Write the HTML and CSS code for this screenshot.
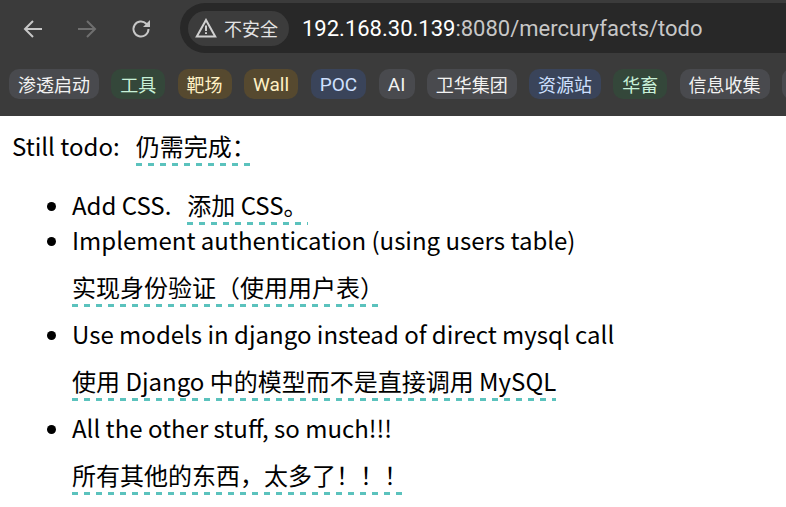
FILE: index.html
```html
<!DOCTYPE html>
<html lang="zh-CN">
<head>
<meta charset="utf-8">
<title>todo</title>
<link rel="stylesheet" href="styles.css">
</head>
<body>
<header class="chrome">
  <div class="toolbar">
    <div class="nav">
      <svg class="icon" viewBox="0 0 24 24"><path d="M21 12H4.500M12 4l-8 8 8 8"/></svg>
      <svg class="icon dim" viewBox="0 0 24 24"><path d="M3 12h16.500M12 4l8 8-8 8"/></svg>
      <svg class="icon" viewBox="0 0 24 24"><path d="M19.500 12a7.500 7.500 0 1 1-2.200-5.300L19 8.500"/><path class="solid" d="M21 3v7h-7z"/></svg>
    </div>
    <div class="omnibox">
      <div class="chip">
        <svg class="warn" viewBox="0 0 22 20"><path d="M11 2 1.800 18.500h18.400z"/><path d="M11 7.500v5.500M11 14.300v1.800"/></svg>
        <span>不安全</span>
      </div>
      <div class="url"><span class="host">192.168.30.139</span>:8080/mercuryfacts/todo</div>
    </div>
  </div>
  <nav class="bookmarks">
    <span class="bm grey">渗透启动</span>
    <span class="bm green">工具</span>
    <span class="bm amber">靶场</span>
    <span class="bm amber latin">Wall</span>
    <span class="bm blue latin">POC</span>
    <span class="bm grey latin">AI</span>
    <span class="bm grey">卫华集团</span>
    <span class="bm blue">资源站</span>
    <span class="bm green">华畜</span>
    <span class="bm grey">信息收集</span>
    <span class="bm grey"></span>
  </nav>
</header>
<main class="page">
  <p class="intro">Still todo:<span class="tr inline">仍需完成：</span></p>
  <ul class="list">
    <li>Add CSS.<span class="tr inline">添加 CSS。</span></li>
    <li>Implement authentication (using users table)<span class="tr block">实现身份验证（使用用户表）</span></li>
    <li>Use models in django instead of direct mysql call<span class="tr block">使用 Django 中的模型而不是直接调用 MySQL</span></li>
    <li>All the other stuff, so much!!!<span class="tr block">所有其他的东西，太多了！！！</span></li>
  </ul>
</main>
</body>
</html>
```

FILE: styles.css
```css
* { box-sizing: border-box; }
html, body { margin: 0; padding: 0; height: 100%; overflow: hidden; background: #fff; }
body { font-family: "Noto Sans CJK SC", "Noto Sans", sans-serif; color: #000; }

.chrome { height: 116px; background: #3b3b3b; color: #fff; display: flex; flex-direction: column; overflow: hidden; }
.toolbar { height: 56px; display: flex; align-items: center; }
.nav { width: 180px; display: flex; gap: 30px; padding: 2px 0 0 21px; align-items: center; flex: none; }
.icon { width: 24px; height: 24px; fill: none; stroke: #c7c7c7; stroke-width: 2; flex: none; }
.icon.dim { stroke: #6f6f6f; }
.icon .solid { fill: #c7c7c7; stroke: none; }
.omnibox { flex: 1; height: 50px; background: #282828; border-radius: 25px 0 0 25px; display: flex; align-items: center; padding-left: 8px; }
.chip { height: 35px; width: 101px; border-radius: 18px; background: #3c3c3c; display: flex; align-items: center; gap: 7px; padding-left: 7px; font-size: 18px; color: #e3e3e3; flex: none; }
.warn { width: 22px; height: 20px; fill: none; stroke: #d0d0d0; stroke-width: 2; flex: none; }
.url { margin-left: 13px; font-family: Roboto, "Noto Sans", sans-serif; font-size: 22px; color: #c7c7c7; white-space: nowrap; }
.host { color: #fff; }

.bookmarks { display: flex; gap: 12.25px; padding: 13px 0 0 9px; white-space: nowrap; }
.bm { height: 30px; min-width: 16px; padding: 0 9px; border-radius: 10px; font-size: 18px; line-height: 30px; flex: none; }
.latin { font-family: Roboto, "Noto Sans", sans-serif; font-size: 19px; line-height: 32px; padding: 0 9.2px; }
.grey { background: #494a4e; color: #f2f2f2; }
.green { background: #34473a; color: #c8f0d8; }
.amber { background: #56492f; color: #fff0c4; }
.blue { background: #3a445a; color: #cfe0ff; }

.page { font-size: 24px; }
.intro { margin: 12px 12px 0; }
.list { margin: 24px 0 0; padding-left: 72px; }
.tr { padding-bottom: 3px; background: repeating-linear-gradient(to right, #5bc2bd 0 6px, transparent 6px 12px) left bottom / 100% 3px no-repeat; }
.tr.inline { margin-left: 16px; }
.tr.block { display: table; margin: 12px 0 9px; }
```
